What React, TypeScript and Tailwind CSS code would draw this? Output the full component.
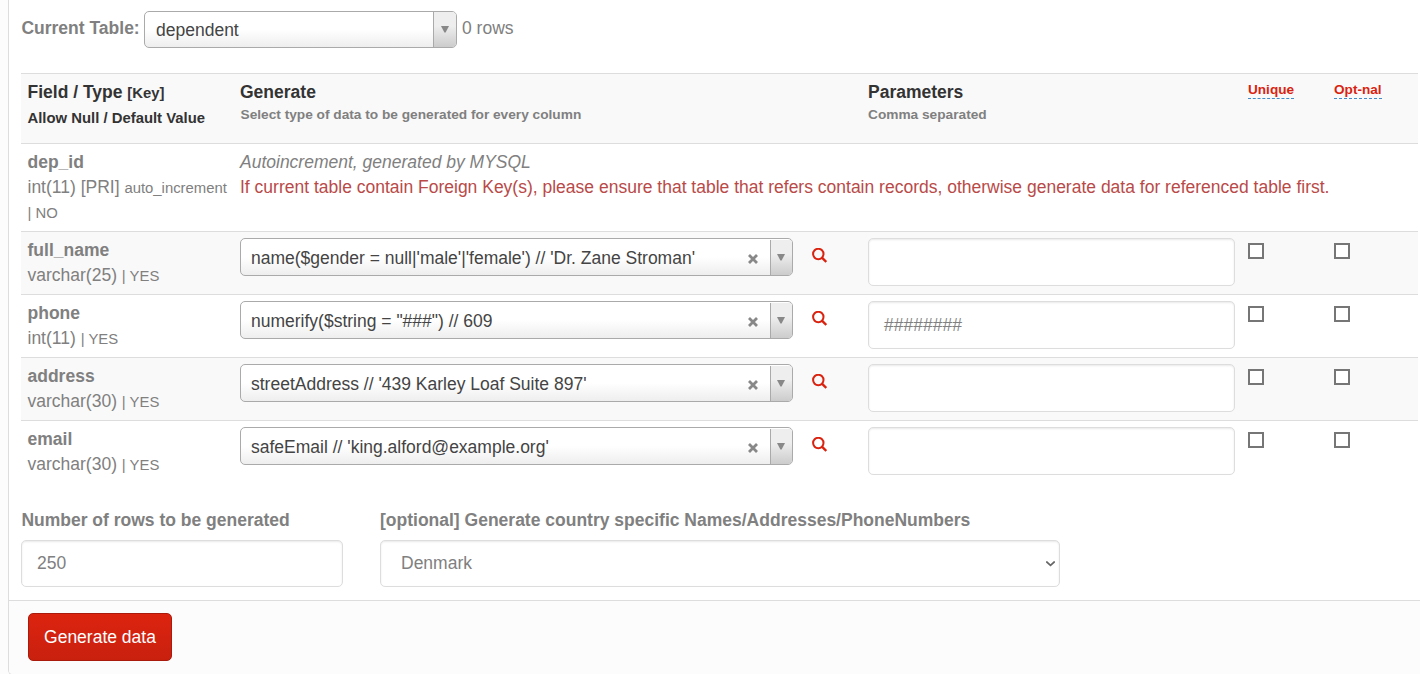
import React from "react";

const rows = [
  { name: "full_name", type: "varchar(25)", gen: "name($gender = null|'male'|'female') // 'Dr. Zane Stroman'", param: "", shaded: true },
  { name: "phone", type: "int(11)", gen: "numerify($string = \"###\") // 609", param: "########", shaded: false },
  { name: "address", type: "varchar(30)", gen: "streetAddress // '439 Karley Loaf Suite 897'", param: "", shaded: true },
  { name: "email", type: "varchar(30)", gen: "safeEmail // 'king.alford@example.org'", param: "", shaded: false },
];

const grid = "grid grid-cols-[212.5px_628px_380px_86px_1fr] pl-[6.5px] border-t border-[#ddd]";
const field = "rounded-[5px] border border-[#ddd] bg-white shadow-[inset_0_1px_2px_rgba(0,0,0,0.09)]";
const small = "text-[14.875px] leading-[24px]";

function Combo({ text, clearable, className }: { text: string; clearable?: boolean; className: string }) {
  return (
    <div className={"flex overflow-hidden rounded-[5px] border border-[#aaa] bg-linear-to-b from-white from-50% to-[#eee] text-[#444] " + className}>
      <span className={"grow whitespace-nowrap " + (clearable ? "pl-[10px]" : "pl-[11px]")}>{text}</span>
      {clearable && (
        <svg className="mr-[12px] mt-[15px] h-[10px] w-[10px]" viewBox="0 0 10 10" stroke="#888" strokeWidth="2.8">
          <path d="M1 1 9 9M9 1 1 9" />
        </svg>
      )}
      <span className={"border-l border-[#aaa] bg-linear-to-b from-[#eee] from-40% to-[#ccc] " + (clearable ? "mt-px w-[22px]" : "w-[23px]")}>
        <svg className={"h-[7px] w-[8px] " + (clearable ? "ml-[6px] mt-[14px]" : "ml-[7px] mt-[14px]")} viewBox="0 0 8 7" fill="#888">
          <path d="M0 0h8L4.6 6.4h-1.2z" />
        </svg>
      </span>
    </div>
  );
}

function Box() {
  return <div className="mt-[11px] h-4 w-4 border-2 border-[#767676] bg-white" />;
}

export default function App() {
  return (
    <div className="h-[674px] overflow-hidden bg-[#fcfcfc] pl-2 font-['Liberation_Sans',Arial,sans-serif] text-[17.5px] leading-[25px] text-[#808080]">
      <div className="flex h-[675px] flex-col overflow-hidden rounded-bl-[5px] border-b border-l border-[#ddd] bg-white">
        <div className="flex h-[73px] shrink-0 items-start pl-[12px] pt-[11px]">
          <b className="mt-[5px] w-[123px] whitespace-nowrap pl-[0.4px]">Current Table:</b>
          <Combo text="dependent" className="h-[37px] w-[313px] leading-[36px]" />
          <span className="ml-[5px] mt-[5px]">0 rows</span>
        </div>

        <div className="ml-[12px] w-[1397px]">
          <div className={grid + " h-[70px] bg-[#f9f9f9] font-bold"}>
            <div className="whitespace-nowrap pt-[6px] text-[#333]">
              <div>Field / Type <span className={small}>[Key]</span></div>
              <div className="text-[14.875px] leading-[27px]">Allow Null / Default Value</div>
            </div>
            <div className="pt-[6px]">
              <div className="text-[#333]">Generate</div>
              <div className="pl-[0.5px] text-[13.7px] leading-[20px]">Select type of data to be generated for every column</div>
            </div>
            <div className="pt-[6px]">
              <div className="text-[#333]">Parameters</div>
              <div className="text-[13.7px] leading-[20px]">Comma separated</div>
            </div>
            <div className="pt-[7px] text-[13.6px] leading-[17px] text-[#d9230f]">
              <span className="inline-block border-b border-dashed border-[#428bca]">Unique</span>
            </div>
            <div className="pt-[7px] text-[13.6px] leading-[17px] text-[#d9230f]">
              <span className="inline-block border-b border-dashed border-[#428bca]">Opt-nal</span>
            </div>
          </div>

          <div className={grid + " h-[88px]"}>
            <div className="pt-[6px]">
              <b>dep_id</b>
              <div className="whitespace-nowrap">int(11) [PRI] <span className={small}>auto_increment</span></div>
              <div className="text-[14.875px] leading-[26px]">| NO</div>
            </div>
            <div className="whitespace-nowrap pt-[6px]">
              <i>Autoincrement, generated by MYSQL</i>
              <div className="text-[#b94a48]">If current table contain Foreign Key(s), please ensure that table that refers contain records, otherwise generate data for referenced table first.</div>
            </div>
          </div>

          {rows.map((r) => (
            <div key={r.name} className={grid + " h-[63px] " + (r.shaded ? "bg-[#f9f9f9]" : "bg-white")}>
              <div className="pt-[6px]">
                <b>{r.name}</b>
                <div>{r.type} <span className={small}>| YES</span></div>
              </div>
              <div className="flex items-start pt-[6px]">
                <Combo text={r.gen} clearable className="h-[38px] w-[553px] leading-[38px]" />
                <svg className="ml-[19px] mt-[10px] h-[15px] w-[15px]" viewBox="0 0 15 15" fill="none" stroke="#d9230f">
                  <circle cx="6.3" cy="6" r="5.2" strokeWidth="2" />
                  <path d="M9.9 9.6 14.3 14" strokeWidth="2.4" />
                </svg>
              </div>
              <div className="pt-[6px]">
                <div className={field + " h-[48px] w-[367px] pl-[15px] leading-[46px]"}>{r.param}</div>
              </div>
              <Box />
              <Box />
            </div>
          ))}
        </div>

        <div className="flex h-[117px] shrink-0 pl-[12px] pt-[25px]">
          <div className="mr-[37px] w-[322px]">
            <b className="block pl-[0.4px]">Number of rows to be generated</b>
            <div className={field + " mt-[7px] h-[47px] pl-[15px] leading-[44px]"}>250</div>
          </div>
          <div className="w-[680px]">
            <b className="block">[optional] Generate country specific Names/Addresses/PhoneNumbers</b>
            <div className={field + " mt-[7px] flex h-[47px] items-start justify-between pl-[20px] pr-[4px] leading-[44px]"}>
              Denmark
              <svg className="mt-[20px] h-[6px] w-[9px]" viewBox="0 0 9 6" fill="none" stroke="#666" strokeWidth="1.7">
                <path d="M.3 .5 4.5 4.4 8.7 .5" />
              </svg>
            </div>
          </div>
        </div>

        <div className="grow border-t border-[#ddd] bg-[#fcfcfc] pl-[19px] pt-[12px]">
          <button className="h-[48px] w-[144px] rounded-[5px] border border-[#a91b0c] bg-linear-to-b from-[#dc2410] to-[#c9200e] text-white">Generate data</button>
        </div>
      </div>
    </div>
  );
}
